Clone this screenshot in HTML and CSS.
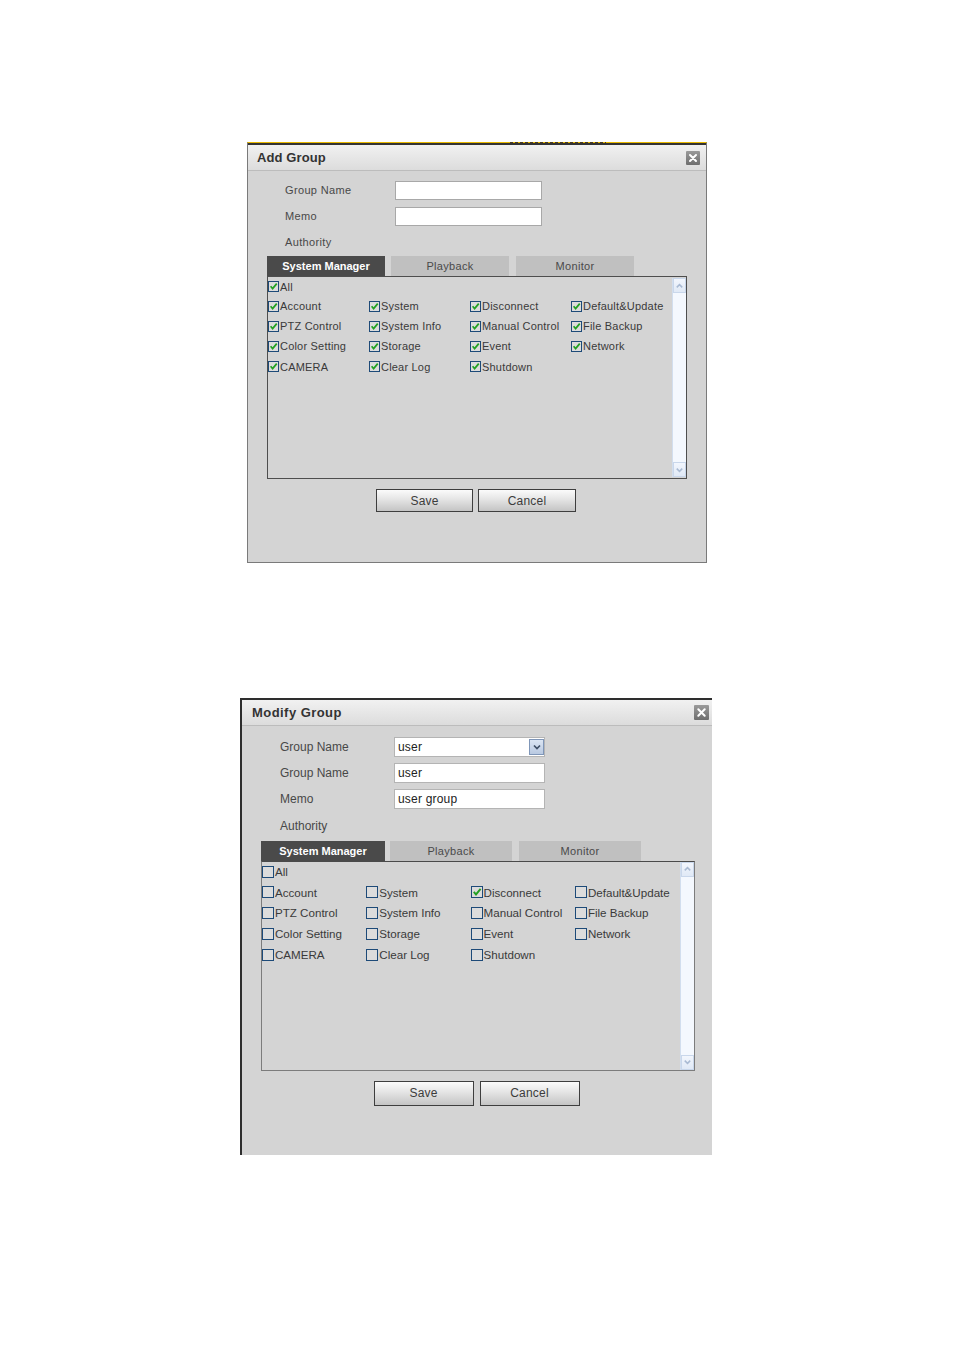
FILE: index.html
```html
<!DOCTYPE html>
<html>
<head>
<meta charset="utf-8">
<link rel="stylesheet" href="styles.css">
</head>
<body>
<div class="page">

  <section class="dlg dlg-add">
    <span class="clip-text"></span>
    <div class="dlg-title">
      <span class="title-text">Add Group</span>
      <span class="close"><svg viewBox="0 0 14 14" width="14" height="14"><defs><linearGradient id="cg1" x1="0" y1="0" x2="0" y2="1"><stop offset="0" stop-color="#9a9a9a"/><stop offset="1" stop-color="#6e6e6e"/></linearGradient></defs><rect x="0" y="0" width="14" height="14" rx="1" fill="url(#cg1)"/><path d="M4 4 L10 10 M10 4 L4 10" stroke="#fff" stroke-width="2" stroke-linecap="round"/></svg></span>
    </div>
    <div class="dlg-body">
      <div class="form">
        <div class="row"><span class="lbl">Group Name</span><span class="input"></span></div>
        <div class="row"><span class="lbl">Memo</span><span class="input"></span></div>
        <div class="row"><span class="lbl">Authority</span></div>
      </div>
      <div class="tabs">
        <span class="tab active">System Manager</span>
        <span class="tab">Playback</span>
        <span class="tab tab-last">Monitor</span>
      </div>
      <div class="panel">
        <div class="items">
          <div class="all"><span class="item"><span class="cb on"><svg viewBox="0 0 10 10"><path d="M1.8 4.8 L4 7.4 L8.6 1.8" fill="none" stroke="#22a022" stroke-width="1.9"/></svg></span>All</span></div>
          <div class="grid">
            <span class="item"><span class="cb on"><svg viewBox="0 0 10 10"><path d="M1.8 4.8 L4 7.4 L8.6 1.8" fill="none" stroke="#22a022" stroke-width="1.9"/></svg></span>Account</span>
            <span class="item"><span class="cb on"><svg viewBox="0 0 10 10"><path d="M1.8 4.8 L4 7.4 L8.6 1.8" fill="none" stroke="#22a022" stroke-width="1.9"/></svg></span>System</span>
            <span class="item"><span class="cb on"><svg viewBox="0 0 10 10"><path d="M1.8 4.8 L4 7.4 L8.6 1.8" fill="none" stroke="#22a022" stroke-width="1.9"/></svg></span>Disconnect</span>
            <span class="item"><span class="cb on"><svg viewBox="0 0 10 10"><path d="M1.8 4.8 L4 7.4 L8.6 1.8" fill="none" stroke="#22a022" stroke-width="1.9"/></svg></span>Default&amp;Update</span>
            <span class="item"><span class="cb on"><svg viewBox="0 0 10 10"><path d="M1.8 4.8 L4 7.4 L8.6 1.8" fill="none" stroke="#22a022" stroke-width="1.9"/></svg></span>PTZ Control</span>
            <span class="item"><span class="cb on"><svg viewBox="0 0 10 10"><path d="M1.8 4.8 L4 7.4 L8.6 1.8" fill="none" stroke="#22a022" stroke-width="1.9"/></svg></span>System Info</span>
            <span class="item"><span class="cb on"><svg viewBox="0 0 10 10"><path d="M1.8 4.8 L4 7.4 L8.6 1.8" fill="none" stroke="#22a022" stroke-width="1.9"/></svg></span>Manual Control</span>
            <span class="item"><span class="cb on"><svg viewBox="0 0 10 10"><path d="M1.8 4.8 L4 7.4 L8.6 1.8" fill="none" stroke="#22a022" stroke-width="1.9"/></svg></span>File Backup</span>
            <span class="item"><span class="cb on"><svg viewBox="0 0 10 10"><path d="M1.8 4.8 L4 7.4 L8.6 1.8" fill="none" stroke="#22a022" stroke-width="1.9"/></svg></span>Color Setting</span>
            <span class="item"><span class="cb on"><svg viewBox="0 0 10 10"><path d="M1.8 4.8 L4 7.4 L8.6 1.8" fill="none" stroke="#22a022" stroke-width="1.9"/></svg></span>Storage</span>
            <span class="item"><span class="cb on"><svg viewBox="0 0 10 10"><path d="M1.8 4.8 L4 7.4 L8.6 1.8" fill="none" stroke="#22a022" stroke-width="1.9"/></svg></span>Event</span>
            <span class="item"><span class="cb on"><svg viewBox="0 0 10 10"><path d="M1.8 4.8 L4 7.4 L8.6 1.8" fill="none" stroke="#22a022" stroke-width="1.9"/></svg></span>Network</span>
            <span class="item"><span class="cb on"><svg viewBox="0 0 10 10"><path d="M1.8 4.8 L4 7.4 L8.6 1.8" fill="none" stroke="#22a022" stroke-width="1.9"/></svg></span>CAMERA</span>
            <span class="item"><span class="cb on"><svg viewBox="0 0 10 10"><path d="M1.8 4.8 L4 7.4 L8.6 1.8" fill="none" stroke="#22a022" stroke-width="1.9"/></svg></span>Clear Log</span>
            <span class="item"><span class="cb on"><svg viewBox="0 0 10 10"><path d="M1.8 4.8 L4 7.4 L8.6 1.8" fill="none" stroke="#22a022" stroke-width="1.9"/></svg></span>Shutdown</span>
          </div>
        </div>
        <div class="scrollbar">
          <span class="sb-btn"><svg viewBox="0 0 12 12" width="12" height="12"><path d="M3 7.5 L6 4.5 L9 7.5" fill="none" stroke="#a9bad3" stroke-width="1.6"/></svg></span>
          <span class="sb-fill"></span>
          <span class="sb-btn"><svg viewBox="0 0 12 12" width="12" height="12"><path d="M3 4.5 L6 7.5 L9 4.5" fill="none" stroke="#a9bad3" stroke-width="1.6"/></svg></span>
        </div>
      </div>
      <div class="buttons">
        <span class="btn btn-save">Save</span>
        <span class="btn btn-cancel">Cancel</span>
      </div>
    </div>
  </section>

  <section class="dlg dlg-mod">
    <div class="dlg-title">
      <span class="title-text">Modify Group</span>
      <span class="close"><svg viewBox="0 0 15 15" width="15" height="15"><defs><linearGradient id="cg2" x1="0" y1="0" x2="0" y2="1"><stop offset="0" stop-color="#9a9a9a"/><stop offset="1" stop-color="#6e6e6e"/></linearGradient></defs><rect x="0" y="0" width="15" height="15" rx="1" fill="url(#cg2)"/><path d="M4.3 4.3 L10.7 10.7 M10.7 4.3 L4.3 10.7" stroke="#fff" stroke-width="2" stroke-linecap="round"/></svg></span>
    </div>
    <div class="dlg-body">
      <div class="form">
        <div class="row"><span class="lbl">Group Name</span><span class="input select"><span class="val">user</span><span class="dd"><svg viewBox="0 0 12 12" width="12" height="12"><path d="M3 4.5 L6 7.5 L9 4.5" fill="none" stroke="#3f4f66" stroke-width="1.7"/></svg></span></span></div>
        <div class="row"><span class="lbl">Group Name</span><span class="input"><span class="val">user</span></span></div>
        <div class="row"><span class="lbl">Memo</span><span class="input"><span class="val">user group</span></span></div>
        <div class="row"><span class="lbl">Authority</span></div>
      </div>
      <div class="tabs">
        <span class="tab active">System Manager</span>
        <span class="tab">Playback</span>
        <span class="tab tab-last">Monitor</span>
      </div>
      <div class="panel">
        <div class="items">
          <div class="all"><span class="item"><span class="cb"></span>All</span></div>
          <div class="grid">
            <span class="item"><span class="cb"></span>Account</span>
            <span class="item"><span class="cb"></span>System</span>
            <span class="item"><span class="cb on"><svg viewBox="0 0 10 10"><path d="M1.8 4.8 L4 7.4 L8.6 1.8" fill="none" stroke="#22a022" stroke-width="1.9"/></svg></span>Disconnect</span>
            <span class="item"><span class="cb"></span>Default&amp;Update</span>
            <span class="item"><span class="cb"></span>PTZ Control</span>
            <span class="item"><span class="cb"></span>System Info</span>
            <span class="item"><span class="cb"></span>Manual Control</span>
            <span class="item"><span class="cb"></span>File Backup</span>
            <span class="item"><span class="cb"></span>Color Setting</span>
            <span class="item"><span class="cb"></span>Storage</span>
            <span class="item"><span class="cb"></span>Event</span>
            <span class="item"><span class="cb"></span>Network</span>
            <span class="item"><span class="cb"></span>CAMERA</span>
            <span class="item"><span class="cb"></span>Clear Log</span>
            <span class="item"><span class="cb"></span>Shutdown</span>
          </div>
        </div>
        <div class="scrollbar">
          <span class="sb-btn"><svg viewBox="0 0 12 12" width="12" height="12"><path d="M3 7.5 L6 4.5 L9 7.5" fill="none" stroke="#a9bad3" stroke-width="1.6"/></svg></span>
          <span class="sb-fill"></span>
          <span class="sb-btn"><svg viewBox="0 0 12 12" width="12" height="12"><path d="M3 4.5 L6 7.5 L9 4.5" fill="none" stroke="#a9bad3" stroke-width="1.6"/></svg></span>
        </div>
      </div>
      <div class="buttons">
        <span class="btn btn-save">Save</span>
        <span class="btn btn-cancel">Cancel</span>
      </div>
    </div>
  </section>

</div>
</body>
</html>
```

FILE: styles.css
```css
* { box-sizing: border-box; }
html, body { margin: 0; padding: 0; background: #ffffff; }
body { font-family: "Liberation Sans", Arial, sans-serif; color: #333; }

.page {
  display: flex;
  flex-direction: column;
  align-items: flex-start;
  padding-top: 142px;
}

.dlg {
  background: #d4d4d4;
  display: flex;
  flex-direction: column;
  position: relative;
}

/* ---------- Add Group ---------- */
.dlg-add {
  margin-left: 247px;
  width: 460px;
  height: 421px;
  border-top: 1px solid #e8b800;
  border-left: 1px solid #7a7a7a;
  border-right: 1px solid #7a7a7a;
  border-bottom: 1px solid #7a7a7a;
  box-shadow: inset 0 2px 0 #333;
}
.clip-text {
  position: absolute;
  left: 262px;
  top: -1px;
  width: 96px;
  height: 1px;
  background: repeating-linear-gradient(90deg, #4a3a20 0 3px, #e8b800 3px 5px);
}

.dlg-mod {
  margin-left: 240px;
  margin-top: 135px;
  width: 472px;
  height: 457px;
  border-top: 2px solid #2e2e2e;
  border-left: 2px solid #2e2e2e;
}

.dlg-title {
  height: 26px;
  flex: none;
  display: flex;
  align-items: center;
  justify-content: space-between;
  background: linear-gradient(#f1f1f1, #dcdcdc);
  border-bottom: 1px solid #bcbcbc;
  font-weight: bold;
  font-size: 13px;
  color: #333;
}
.dlg-add .dlg-title { margin-top: 2px; height: 26px; padding: 0 6px 0 9px; }
.dlg-add .title-text { letter-spacing: 0.1px; }
.dlg-mod .dlg-title { height: 26px; padding: 0 3px 0 10px; }
.dlg-mod .title-text { letter-spacing: 0.45px; }
.close { display: flex; }
.close svg { display: block; }

.dlg-body {
  flex: 1;
  display: flex;
  flex-direction: column;
  padding-left: 19px;
}

/* form */
.form { display: flex; flex-direction: column; }
.row { display: flex; align-items: center; height: 26px; }
.lbl { color: #484848; }
.input {
  background: #fff;
  border: 1px solid #a8a8a8;
  display: flex;
  align-items: center;
}
.dlg-add .form { padding-top: 6px; padding-left: 18px; }
.dlg-add .lbl { width: 110px; font-size: 11px; letter-spacing: 0.35px; }
.dlg-add .input { width: 147px; height: 19px; }
.dlg-add .tabs { margin-top: 1px; }

.dlg-mod .form { padding-top: 8px; padding-left: 19px; }
.dlg-mod .row { height: 26.2px; }
.dlg-mod .lbl { width: 114px; font-size: 12px; }
.dlg-mod .input { width: 151px; height: 20px; border-color: #b4b4b4; }
.val { font-size: 12px; color: #222; padding-left: 3px; letter-spacing: 0.2px; }
.select { justify-content: space-between; }
.dd {
  width: 15px;
  height: 16px;
  border: 1px solid #7f96b8;
  background: linear-gradient(#dbe5f3, #b9c9e1);
  display: flex;
  align-items: center;
  justify-content: center;
}

/* tabs */
.tabs { display: flex; height: 20px; flex: none; }
.tab {
  height: 20px;
  display: flex;
  align-items: center;
  justify-content: center;
  background: #c0c0c0;
  color: #4a4a4a;
  font-size: 11px;
  letter-spacing: 0.3px;
}
.tab.active { background: #4a4a4a; color: #fff; font-weight: bold; letter-spacing: 0; }
.dlg-add .tabs { gap: 6px; }
.dlg-add .tab { width: 118px; }
.dlg-add .tab-last { margin-left: 1px; }
.dlg-mod .tabs { gap: 5px; margin-top: 2px; }
.dlg-mod .tab { width: 122px; }
.dlg-mod .tab.active { width: 124px; }
.dlg-mod .tab-last { margin-left: 2px; }

/* panel */
.panel {
  display: flex;
  flex: none;
  border: 1px solid #4e4e4e;
}
.dlg-add .panel { width: 420px; height: 203px; }
.dlg-mod .panel { width: 434px; height: 210px; border-color: #7c7c7c; border-top-color: #4a4a4a; }

.items { flex: 1; display: flex; flex-direction: column; }
.grid { display: grid; }
.dlg-add .grid { grid-template-columns: repeat(4, 101px); grid-auto-rows: 20.2px; }
.dlg-add .all { height: 19px; }
.dlg-mod .items { padding-top: 0; }
.dlg-mod .grid { grid-template-columns: repeat(4, 104.3px); grid-auto-rows: 20.8px; }
.dlg-mod .all { height: 20px; }

.item {
  display: flex;
  align-items: center;
  height: 100%;
  color: #3a3a3a;
  white-space: nowrap;
}
.cb {
  flex: none;
  border: 1px solid #1d4a78;
  background: #dcdcdc;
  display: flex;
  margin-right: 1px;
}
.cb svg { display: block; width: 100%; height: 100%; }
.dlg-add .item { font-size: 11px; letter-spacing: 0.2px; }
.dlg-add .cb { width: 11px; height: 11px; }
.dlg-mod .item { font-size: 11.6px; letter-spacing: 0; }
.dlg-mod .cb { width: 12px; height: 12px; }

.scrollbar {
  flex: none;
  width: 14px;
  display: flex;
  flex-direction: column;
  background: #f4f8fe;
  border-left: 1px solid #d2deee;
}
.dlg-add .scrollbar { margin: 1px 0 1px 0; }
.sb-btn {
  height: 15px;
  flex: none;
  display: flex;
  align-items: center;
  justify-content: center;
  background: linear-gradient(#f2f6fd, #e0e9f6);
  border: 1px solid #c9d7eb;
}
.sb-fill { flex: 1; }

/* buttons */
.buttons {
  display: flex;
  justify-content: center;
  margin-top: 10px;
}
.btn {
  display: flex;
  align-items: center;
  justify-content: center;
  border: 1px solid #3e3e3e;
  background: linear-gradient(#fbfbfb 0%, #e4e4e4 45%, #c4c4c4 100%);
  color: #3c3c3c;
  font-size: 12px;
  letter-spacing: 0.2px;
}
.dlg-add .buttons { width: 420px; gap: 5px; padding-right: 2px; }
.dlg-add .btn { height: 23px; }
.dlg-add .btn-save { width: 97px; }
.dlg-add .btn-cancel { width: 98px; }
.dlg-mod .buttons { width: 434px; gap: 6px; padding-right: 3px; }
.dlg-mod .btn { height: 25px; width: 100px; }
```
